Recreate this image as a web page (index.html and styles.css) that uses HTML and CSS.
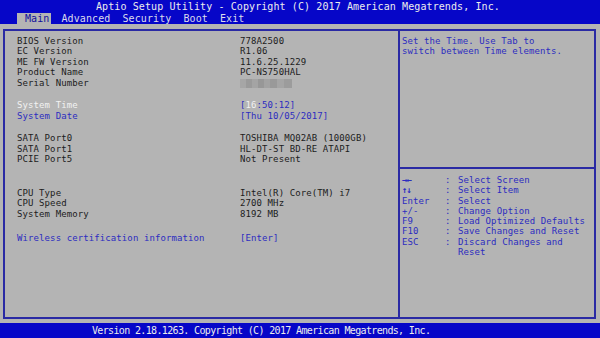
FILE: index.html
```html
<!DOCTYPE html>
<html lang="en">
<head>
  <meta charset="UTF-8" />
  <title>Aptio Setup Utility</title>
  <link rel="stylesheet" href="styles.css">
</head>
<body>

  <!-- Title + tabs -->
  <header class="topbar">
    <div class="title">Aptio Setup Utility - Copyright (C) 2017 American Megatrends, Inc.</div>
    <nav class="tabs">
      <span class="tab active">Main</span>
      <span class="tab">Advanced</span>
      <span class="tab">Security</span>
      <span class="tab">Boot</span>
      <span class="tab">Exit</span>
    </nav>
  </header>

  <main class="body">
    <div class="frame">

      <!-- Left: info rows -->
      <section class="info">
        <div class="row"><span class="label">BIOS Version</span><span>778A2500</span></div>
        <div class="row"><span class="label">EC Version</span><span>R1.06</span></div>
        <div class="row"><span class="label">ME FW Version</span><span>11.6.25.1229</span></div>
        <div class="row"><span class="label">Product Name</span><span>PC-NS750HAL</span></div>
        <div class="row"><span class="label">Serial Number</span><span class="blur"></span></div>

        <div class="row gap-s selected"><span class="label">System Time</span><span class="opt">[<b>16</b>:50:12]</span></div>
        <div class="row option"><span class="label">System Date</span><span class="opt">[Thu 10/05/2017]</span></div>

        <div class="row gap-s"><span class="label">SATA Port0</span><span>TOSHIBA MQ02AB (1000GB)</span></div>
        <div class="row"><span class="label">SATA Port1</span><span>HL-DT-ST BD-RE ATAPI</span></div>
        <div class="row"><span class="label">PCIE Port5</span><span>Not Present</span></div>

        <div class="row gap-l"><span class="label">CPU Type</span><span>Intel(R) Core(TM) i7</span></div>
        <div class="row"><span class="label">CPU Speed</span><span>2700 MHz</span></div>
        <div class="row"><span class="label">System Memory</span><span>8192 MB</span></div>

        <div class="row gap-m option"><span class="label">Wireless certification information</span><span class="opt">[Enter]</span></div>
      </section>

      <!-- Right: help + keys -->
      <aside class="side">
        <div class="help">Set the Time. Use Tab to<br>switch between Time elements.</div>
        <div class="keys">
          <span class="arrow">→←</span><span>:</span><span>Select Screen</span>
          <span class="arrow">↑↓</span><span>:</span><span>Select Item</span>
          <span>Enter</span><span>:</span><span>Select</span>
          <span>+/-</span><span>:</span><span>Change Option</span>
          <span>F9</span><span>:</span><span>Load Optimized Defaults</span>
          <span>F10</span><span>:</span><span>Save Changes and Reset</span>
          <span>ESC</span><span>:</span><span>Discard Changes and<br>Reset</span>
        </div>
      </aside>

    </div>
  </main>

  <footer class="footer">Version 2.18.1263. Copyright (C) 2017 American Megatrends, Inc.</footer>

</body>
</html>
```

FILE: styles.css
```css
body {
  margin: 0;
  width: 600px;
  height: 338px;
  overflow: hidden;
  background: #b4b4b4;
  font-family: "DejaVu Sans Mono", "Liberation Mono", monospace;
  font-size: 9px;
  letter-spacing: 0.1px;
  color: #1c1c1c;
  display: flex;
  flex-direction: column;
}

.topbar {
  background: #0606c8;
  color: #ececec;
  font-size: 10px;
  letter-spacing: 0.1px;
}

.title {
  height: 13px;
  line-height: 13px;
  padding-left: 96px;
}

.tabs {
  display: flex;
  gap: 2px;
  height: 11px;
  line-height: 11px;
  padding-left: 17px;
}

.tab {
  padding: 0 2px 0 8px;
  color: #dcdcec;
}

.tab.active {
  background: #b4b4b4;
  color: #10109c;
}

.body {
  flex: 1;
  padding: 5px 4px 4px 3px;
}

.frame {
  height: 100%;
  box-sizing: border-box;
  border: 2px solid #2a2aa4;
  display: flex;
}

.info {
  width: 393px;
  padding: 4.5px 0 0 12px;
  box-sizing: border-box;
}

.row {
  display: grid;
  grid-template-columns: 223px auto;
  line-height: 10.5px;
  white-space: nowrap;
}

.gap-s { margin-top: 12px; }
.gap-m { margin-top: 13.5px; }
.gap-l { margin-top: 23px; }

.option,
.opt {
  color: #2c2cc0;
}

.selected .label {
  color: #f2f2f2;
}

.opt b {
  font-weight: normal;
  color: #f2f2f2;
}

.blur {
  display: inline-block;
  width: 52px;
  height: 9px;
  margin-top: 1px;
  background: linear-gradient(90deg,
    #a6a6a6 0 6px, #9a9a9a 6px 12px, #a4a4a4 12px 18px, #979797 18px 24px,
    #a2a2a2 24px 30px, #999999 30px 37px, #a5a5a5 37px 44px, #9c9c9c 44px 52px);
}

.side {
  flex: 1;
  border-left: 2px solid #2a2aa4;
  color: #2c2cc0;
  display: flex;
  flex-direction: column;
}

.help {
  height: 138px;
  padding: 4.5px 0 0 2px;
  box-sizing: border-box;
  line-height: 10px;
  border-bottom: 2px solid #2a2aa4;
}

.keys {
  display: grid;
  grid-template-columns: 43px 13px auto;
  padding: 6px 0 0 2px;
  line-height: 10.3px;
}

.arrow {
  font-weight: bold;
  letter-spacing: -1px;
}

.footer {
  background: #0606c8;
  color: #ececec;
  height: 15px;
  line-height: 15px;
  font-size: 10px;
  letter-spacing: -0.65px;
  padding-left: 92px;
}
```
